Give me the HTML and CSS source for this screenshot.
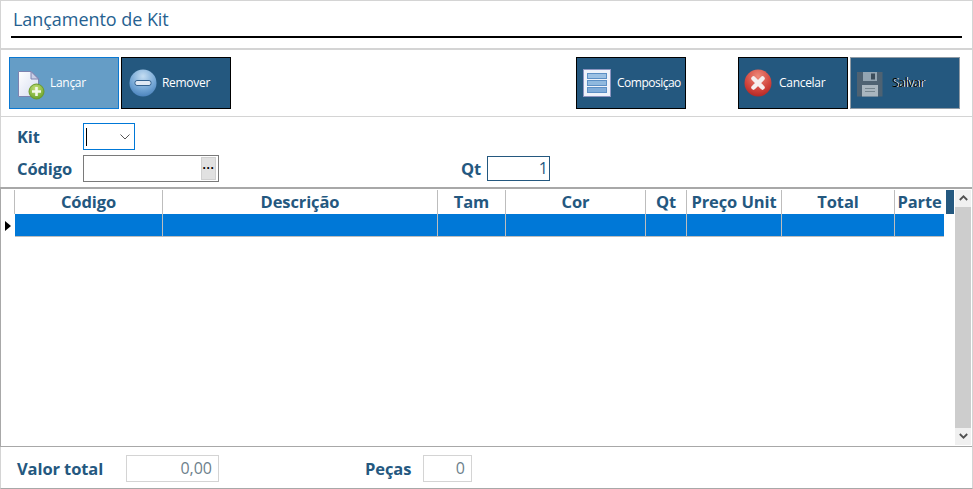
FILE: index.html
```html
<!DOCTYPE html>
<html lang="pt">
<head>
<meta charset="utf-8">
<title>Lançamento de Kit</title>
<link rel="stylesheet" href="styles.css">
</head>
<body>
<div class="window">
  <header class="title-band">
    <h1 class="title">Lançamento de Kit</h1>
  </header>
  <div class="toolbar">
    <button class="btn btn-hot">
      <svg class="ico" width="30" height="30" viewBox="0 0 30 30">
        <defs>
          <linearGradient id="pg" x1="0" y1="0" x2="1" y2="1"><stop offset="0" stop-color="#fff"/><stop offset="1" stop-color="#d5dcf0"/></linearGradient>
          <radialGradient id="gg" cx=".45" cy=".3" r=".8"><stop offset="0" stop-color="#c5e27a"/><stop offset="1" stop-color="#5f9a1f"/></radialGradient>
        </defs>
        <path d="M1.500 1.500H14L21.500 9V26.500H1.500Z" fill="url(#pg)" stroke="#7d83b0"/>
        <path d="M14 1.500V9H21.500Z" fill="#c9cfe6" stroke="#7d83b0"/>
        <circle cx="19.500" cy="21.500" r="7.500" fill="url(#gg)" stroke="#6b9a2c"/>
        <path d="M19.500 17V26M15 21.500H24" stroke="#f4f8ea" stroke-width="2.600"/>
      </svg>
      <span class="btn-label">Lançar</span>
    </button>
    <button class="btn">
      <svg class="ico ico-remove" width="28" height="28" viewBox="0 0 28 28">
        <defs><radialGradient id="bg" cx=".5" cy=".25" r=".85"><stop offset="0" stop-color="#c4ddf2"/><stop offset=".6" stop-color="#6fa3d3"/><stop offset="1" stop-color="#3f78b4"/></radialGradient></defs>
        <circle cx="14" cy="14" r="13.500" fill="url(#bg)"/>
        <rect x="6" y="11.500" width="16" height="5" rx="2" fill="#dfe9f4" stroke="#33628f"/>
      </svg>
      <span class="btn-label">Remover</span>
    </button>
    <button class="btn btn-comp">
      <svg class="ico ico-comp" width="28" height="28" viewBox="0 0 28 28">
        <rect x=".5" y=".5" width="27" height="27" fill="#eef2fa" stroke="#8c94c0"/>
        <rect x="4.500" y="4.500" width="19" height="5" fill="#9cc1e4" stroke="#5c8fc4"/>
        <rect x="4.500" y="11.500" width="19" height="5" fill="#8fb8de" stroke="#5c8fc4"/>
        <rect x="4.500" y="18.500" width="19" height="5" fill="#7fabd8" stroke="#5c8fc4"/>
      </svg>
      <span class="btn-label">Composiçao</span>
    </button>
    <button class="btn btn-cancel">
      <svg class="ico ico-remove" width="28" height="28" viewBox="0 0 28 28">
        <defs><radialGradient id="rg" cx=".5" cy=".25" r=".85"><stop offset="0" stop-color="#ee8a7a"/><stop offset=".6" stop-color="#d0423a"/><stop offset="1" stop-color="#a81f1e"/></radialGradient></defs>
        <circle cx="14" cy="14" r="13.500" fill="url(#rg)"/>
        <path d="M9.500 9.500L18.500 18.500M18.500 9.500L9.500 18.500" stroke="#f6eeee" stroke-width="4.500" stroke-linecap="round"/>
      </svg>
      <span class="btn-label">Cancelar</span>
    </button>
    <button class="btn btn-off">
      <svg class="ico ico-save" width="26" height="26" viewBox="0 0 26 26">
        <path d="M0 1H25.500V25.500H0Z" fill="#4e6272"/>
        <rect x="6" y="1" width="14" height="9" fill="#93a5b2"/>
        <rect x="14" y="2.500" width="4" height="6" fill="#3c4d5b"/>
        <rect x="5" y="14" width="16" height="11.500" fill="#a9b6bf"/>
        <path d="M8 17.500H18M8 20.500H18" stroke="#76868f"/>
      </svg>
      <span class="btn-label btn-label-off">Salvar</span>
    </button>
  </div>
  <section class="form">
    <div class="form-row row-kit">
      <label class="lbl lbl-first">Kit</label>
      <div class="combo">
        <span class="caret"></span>
        <svg width="10" height="6" viewBox="0 0 10 6"><path d="M.5 .5L5 5L9.500 .5" fill="none" stroke="#555"/></svg>
      </div>
    </div>
    <div class="form-row row-code">
      <label class="lbl lbl-first">Código</label>
      <div class="lookup"><span class="dots">···</span></div>
      <label class="lbl lbl-qt">Qt</label>
      <div class="qt-input">1</div>
    </div>
  </section>
  <section class="grid">
    <div class="table">
      <div class="thead">
        <div class="indicator"></div>
        <div class="th c1">Código</div>
        <div class="th c2">Descrição</div>
        <div class="th c3">Tam</div>
        <div class="th c4">Cor</div>
        <div class="th c5">Qt</div>
        <div class="th c6">Preço Unit</div>
        <div class="th c7">Total</div>
        <div class="th c8">Parte</div>
      </div>
      <div class="tr">
        <div class="indicator"><span class="arrow"></span></div>
        <div class="td c1"></div>
        <div class="td c2"></div>
        <div class="td c3"></div>
        <div class="td c4"></div>
        <div class="td c5"></div>
        <div class="td c6"></div>
        <div class="td c7"></div>
        <div class="td c8"></div>
      </div>
    </div>
    <div class="corner"></div>
    <div class="scrollbar">
      <svg class="sb-arrow" width="9" height="6" viewBox="0 0 9 6"><path d="M.8 5L4.500 1.300L8.200 5" fill="none" stroke="#505050" stroke-width="1.800"/></svg>
      <div class="sb-thumb"></div>
      <svg class="sb-arrow" width="9" height="6" viewBox="0 0 9 6"><path d="M.8 1L4.500 4.700L8.200 1" fill="none" stroke="#505050" stroke-width="1.800"/></svg>
    </div>
  </section>
  <footer class="footer">
    <label class="lbl lbl-total">Valor total</label>
    <div class="ro ro-total">0,00</div>
    <label class="lbl lbl-pecas">Peças</label>
    <div class="ro ro-pecas">0</div>
  </footer>
</div>
</body>
</html>
```
FILE: styles.css
```css
* { box-sizing: border-box; }
html, body { margin: 0; padding: 0; background: #fff; }
body { width: 973px; height: 489px; overflow: hidden; font-family: "Open Sans", "Noto Sans", sans-serif; }
.window {
  width: 973px; height: 489px;
  border: 1px solid #d4d4d4;
  border-bottom-color: #a8a8a8;
  display: flex; flex-direction: column;
}
.title-band { height: 49px; border-bottom: 2px solid #d4d4d4; padding: 0 10px; flex: none; }
.title {
  margin: 0; height: 37px; border-bottom: 2px solid #000;
  font: 400 18px/36px "Open Sans", sans-serif; color: #266190; padding-left: 2px;
  letter-spacing: -.05px;
}
.toolbar {
  height: 67px; flex: none; padding: 7px 0 0 8px; display: flex; align-items: flex-start;
  border-bottom: 1px solid #d4d4d4;
}
.btn {
  width: 110px; height: 52px; flex: none; padding: 0 0 0 7px; margin: 0 2px 0 0;
  background: #24587f; border: 1px solid #000; color: #fff;
  display: flex; align-items: center; text-align: left;
  font: 400 12px "Open Sans", sans-serif;
}
.btn-hot { background: #659dc6; border-color: #0a78d2; }
.btn-comp { margin-left: 343px; padding-left: 6px; }
.btn-cancel { margin-left: 50px; padding-left: 5px; }
.btn-off { padding-left: 6px; margin-right: 0; border-color: #8f9aa4; }
.ico { flex: none; display: block; }
.btn-hot .ico { margin-top: 3px; }
.ico-remove { margin-right: 5px; }
.btn-cancel .ico-remove { margin-right: 7px; }
.ico-comp { margin-right: 6px; }
.ico-save { margin-right: 9px; margin-top: 2px; }
.btn-hot .btn-label { margin-left: 3px; margin-top: -1px; }
.btn-label { letter-spacing: -.3px; margin-top: -1px; }
.btn-label-off { color: #000; text-shadow: 1px 0 0 #fff; }
.btn-comp .btn-label { letter-spacing: -.5px; }

.form { height: 70px; flex: none; }
.form-row { display: flex; align-items: center; }
.row-kit { height: 27px; margin-top: 6px; }
.row-code { height: 27px; margin-top: 5px; }
.lbl { font: 700 16.5px "Open Sans", sans-serif; color: #24587f; white-space: nowrap; letter-spacing: -.1px; }
.lbl-first { width: 66px; margin-left: 16px; flex: none; }
.combo {
  width: 52px; height: 27px; border: 1px solid #0078d7; background: #fff;
  display: flex; align-items: center; justify-content: space-between; padding: 0 4px 0 2px;
}
.caret { width: 1px; height: 18px; background: #000; }
.lookup {
  width: 136px; height: 27px; border: 1px solid #7a7a7a; background: #fff;
  display: flex; justify-content: flex-end; padding: 1px 2px;
}
.dots {
  width: 15px; height: 23px; background: #e1e1e1; border: 1px solid #d0d0d0;
  font: 700 12px/21px "Liberation Sans", sans-serif; text-align: center; color: #000; overflow: hidden;
}
.lbl-qt { margin-left: 242px; width: 26px; flex: none; }
.qt-input {
  width: 63px; height: 25px; border: 1px solid #24587f; background: #fff;
  font: 400 16px/23px "Open Sans", sans-serif; color: #24587f; text-align: right; padding-right: 1px;
}

.grid {
  height: 260px; flex: none; display: flex; align-items: flex-start;
  border-top: 2px solid #a8a8a8; border-bottom: 1px solid #a8a8a8; border-left: 1px solid #a8a8a8;
  margin-left: -1px; padding-top: 1px;
}
.table { width: 945px; flex: none; }
.thead, .tr { display: flex; }
.thead { height: 24px; }
.tr { height: 23px; }
.indicator { width: 13px; flex: none; display: flex; align-items: center; padding-left: 4px; }
.arrow { width: 0; height: 0; border-left: 6px solid #000; border-top: 5px solid transparent; border-bottom: 5px solid transparent; }
.th {
  flex: none; border-left: 1px solid #bdbdbd; text-align: center; white-space: nowrap; overflow: hidden;
  font: 700 16.5px/24px "Open Sans", sans-serif; color: #24587f; letter-spacing: -.1px;
}
.td { flex: none; background: #0078d7; border-left: 1px solid #bdbdbd; border-bottom: 1px solid #bdbdbd; }
.tr .c1 { border-left-width: 0; margin-left: 1px; width: 147px; }
.c1 { width: 148px; }
.c2 { width: 275px; }
.c3 { width: 68px; }
.c4 { width: 140px; }
.c5 { width: 41px; }
.c6 { width: 95px; }
.c7 { width: 113px; }
.c8 { width: 50px; }
.corner { width: 8px; height: 24px; background: #24587f; flex: none; }
.scrollbar {
  width: 16px; height: 255px; margin-left: 1px; flex: none; background: #f0f0f0;
  display: flex; flex-direction: column; align-items: center; justify-content: space-between;
}
.sb-arrow { display: block; margin: 5px 0 6px; flex: none; }
.sb-thumb { width: 16px; flex: 1; background: #cdcdcd; }

.footer { flex: 1; display: flex; align-items: flex-start; padding-top: 8px; }
.lbl-total { margin-left: 16px; width: 109px; flex: none; line-height: 27px; }
.ro {
  height: 27px; border: 1px solid #d4d4d4; background: #fff; flex: none;
  font: 400 16px/25px "Open Sans", sans-serif; color: #6d7f8c; text-align: right; padding-right: 6px;
}
.ro-total { width: 93px; }
.lbl-pecas { margin-left: 146px; width: 58px; flex: none; line-height: 27px; }
.ro-pecas { width: 49px; }
```
